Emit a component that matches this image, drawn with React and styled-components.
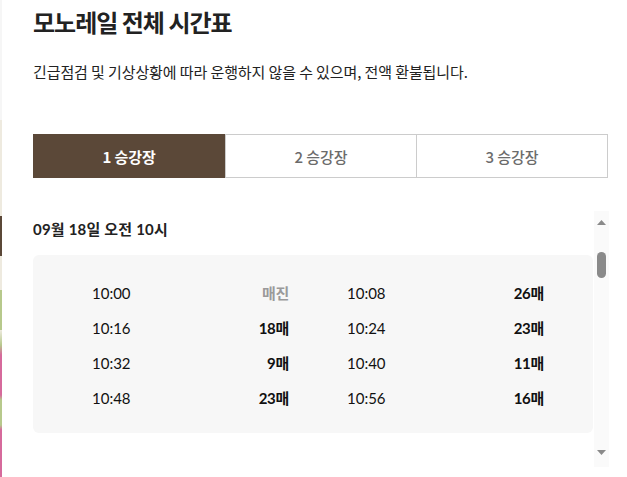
import React from 'react';
import styled, { createGlobalStyle } from 'styled-components'

const GlobalStyle = createGlobalStyle`
  html, body {
    margin: 0;
    padding: 0;
    background: #ffffff;
  }
  * { box-sizing: border-box; }
`

const Page = styled.div`
  display: flex;
  width: 627px;
  height: 477px;
  overflow: hidden;
`
/*sliver of the page behind the modal*/
const BehindStrip = styled.div`
  width: 2px;
  flex-shrink: 0;
  background: linear-gradient(
    to bottom,
    #f6f6f6 0px, #f6f6f6 120px,
    #eeeadf 120px, #eeeadf 216px,
    #5b4838 216px, #5b4838 256px,
    #eeeadf 256px, #eeeadf 290px,
    #b7c98c 290px, #b7c98c 330px,
    #eeeadf 330px, #b7c98c 345px,
    #d66a9c 355px, #d66a9c 395px,
    #b7c98c 400px, #b7c98c 425px,
    #d66a9c 430px, #d66a9c 477px
  );
`
const Modal = styled.div`
  flex: 1;
  display: flex;
  flex-direction: column;
  padding: 5px 18px 0 31px;
  color: #222;
  font-family: "Noto Sans CJK KR", sans-serif;
`
const Title = styled.h1`
  margin: 0;
  font-size: 24px;
  line-height: 34px;
  font-weight: 700;
  letter-spacing: -1px;
  color: #222;
`
const Notice = styled.p`
  margin: 23px 0 0;
  font-size: 15px;
  line-height: 20px;
  letter-spacing: -0.1px;
  color: #222;
`
/*platform tabs*/
const Tabs = styled.div`
  margin-top: 52px;
  display: grid;
  grid-template-columns: repeat(3, 1fr);
  height: 44px;
  margin-right: 1px;
  border: 1px solid #cccccc;
`
const Tab = styled.button`
  border: none;
  border-left: ${p => (p.first ? 'none' : '1px solid #cccccc')};
  background-color: ${p => (p.active ? '#5b4838' : '#ffffff')};
  color: ${p => (p.active ? '#ffffff' : '#6b6b6b')};
  font-family: "Noto Sans CJK KR", sans-serif;
  font-weight: ${p => (p.active ? 700 : 500)};
  font-size: 15px;
  letter-spacing: -0.1px;
  margin: ${p => (p.active ? '-1px 0 -1px -1px' : '0')};
  padding: 0;
`
const ScrollArea = styled.div`
  margin-top: 33px;
  height: 256px;
  display: flex;
`
const ScrollContent = styled.div`
  flex: 1;
  overflow: hidden;
  padding-top: 8px;
  padding-right: 1px;
`
const DateTitle = styled.h2`
  margin: 0;
  font-family: Lato, "Noto Sans CJK KR", sans-serif;
  font-size: 15px;
  line-height: 20px;
  font-weight: 700;
  letter-spacing: 0.2px;
  color: #222;
`
const Card = styled.div`
  margin-top: 16px;
  background-color: #f7f7f7;
  border-radius: 6px;
  padding: 20px 0 18px 59px;
  display: grid;
  grid-template-columns: repeat(2, 197px);
  column-gap: 58px;
`
const Slot = styled.div`
  display: flex;
  justify-content: space-between;
  align-items: center;
  height: 35px;
  font-family: Lato, "Noto Sans CJK KR", sans-serif;
  font-size: 15px;
  color: #111;
`
const Seats = styled.span`
  font-weight: 700;
  letter-spacing: -0.3px;
  color: ${p => (p.soldOut ? '#9a9a9a' : '#111')};
`
/*fake scrollbar*/
const ScrollBar = styled.div`
  width: 15px;
  flex-shrink: 0;
  background-color: #fafafa;
  display: flex;
  flex-direction: column;
  align-items: center;
  padding-top: 9px;
`
const Arrow = styled.svg`
  width: 9px;
  height: 5px;
  fill: #8a8a8a;
`
const Thumb = styled.div`
  margin-top: 27px;
  width: 9px;
  height: 26px;
  border-radius: 5px;
  background-color: #8a8a8a;
`
const Spacer = styled.div`
  flex: 1;
`

const slots = [
  ['10:00', '매진'], ['10:08', '26매'],
  ['10:16', '18매'], ['10:24', '23매'],
  ['10:32', '9매'], ['10:40', '11매'],
  ['10:48', '23매'], ['10:56', '16매'],
]

function App(){
  return(
    <Page>
      <GlobalStyle />
      <BehindStrip />
      <Modal>
        <Title>모노레일 전체 시간표</Title>
        <Notice>긴급점검 및 기상상황에 따라 운행하지 않을 수 있으며, 전액 환불됩니다.</Notice>
        <Tabs>
          <Tab first active>1 승강장</Tab>
          <Tab>2 승강장</Tab>
          <Tab>3 승강장</Tab>
        </Tabs>
        <ScrollArea>
          <ScrollContent>
            <DateTitle>09월 18일 오전 10시</DateTitle>
            <Card>
              {slots.map(([time, seats]) => (
                <Slot key={time}>
                  <span>{time}</span>
                  <Seats soldOut={seats === '매진'}>{seats}</Seats>
                </Slot>
              ))}
            </Card>
          </ScrollContent>
          <ScrollBar>
            <Arrow viewBox="0 0 9 5"><polygon points="4.5,0 9,5 0,5" /></Arrow>
            <Thumb />
            <Spacer />
            <Arrow viewBox="0 0 9 5"><polygon points="0,0 9,0 4.5,5" /></Arrow>
            <div style={{ height: 12 }} />
          </ScrollBar>
        </ScrollArea>
      </Modal>
    </Page>
  )
}
export default App;
